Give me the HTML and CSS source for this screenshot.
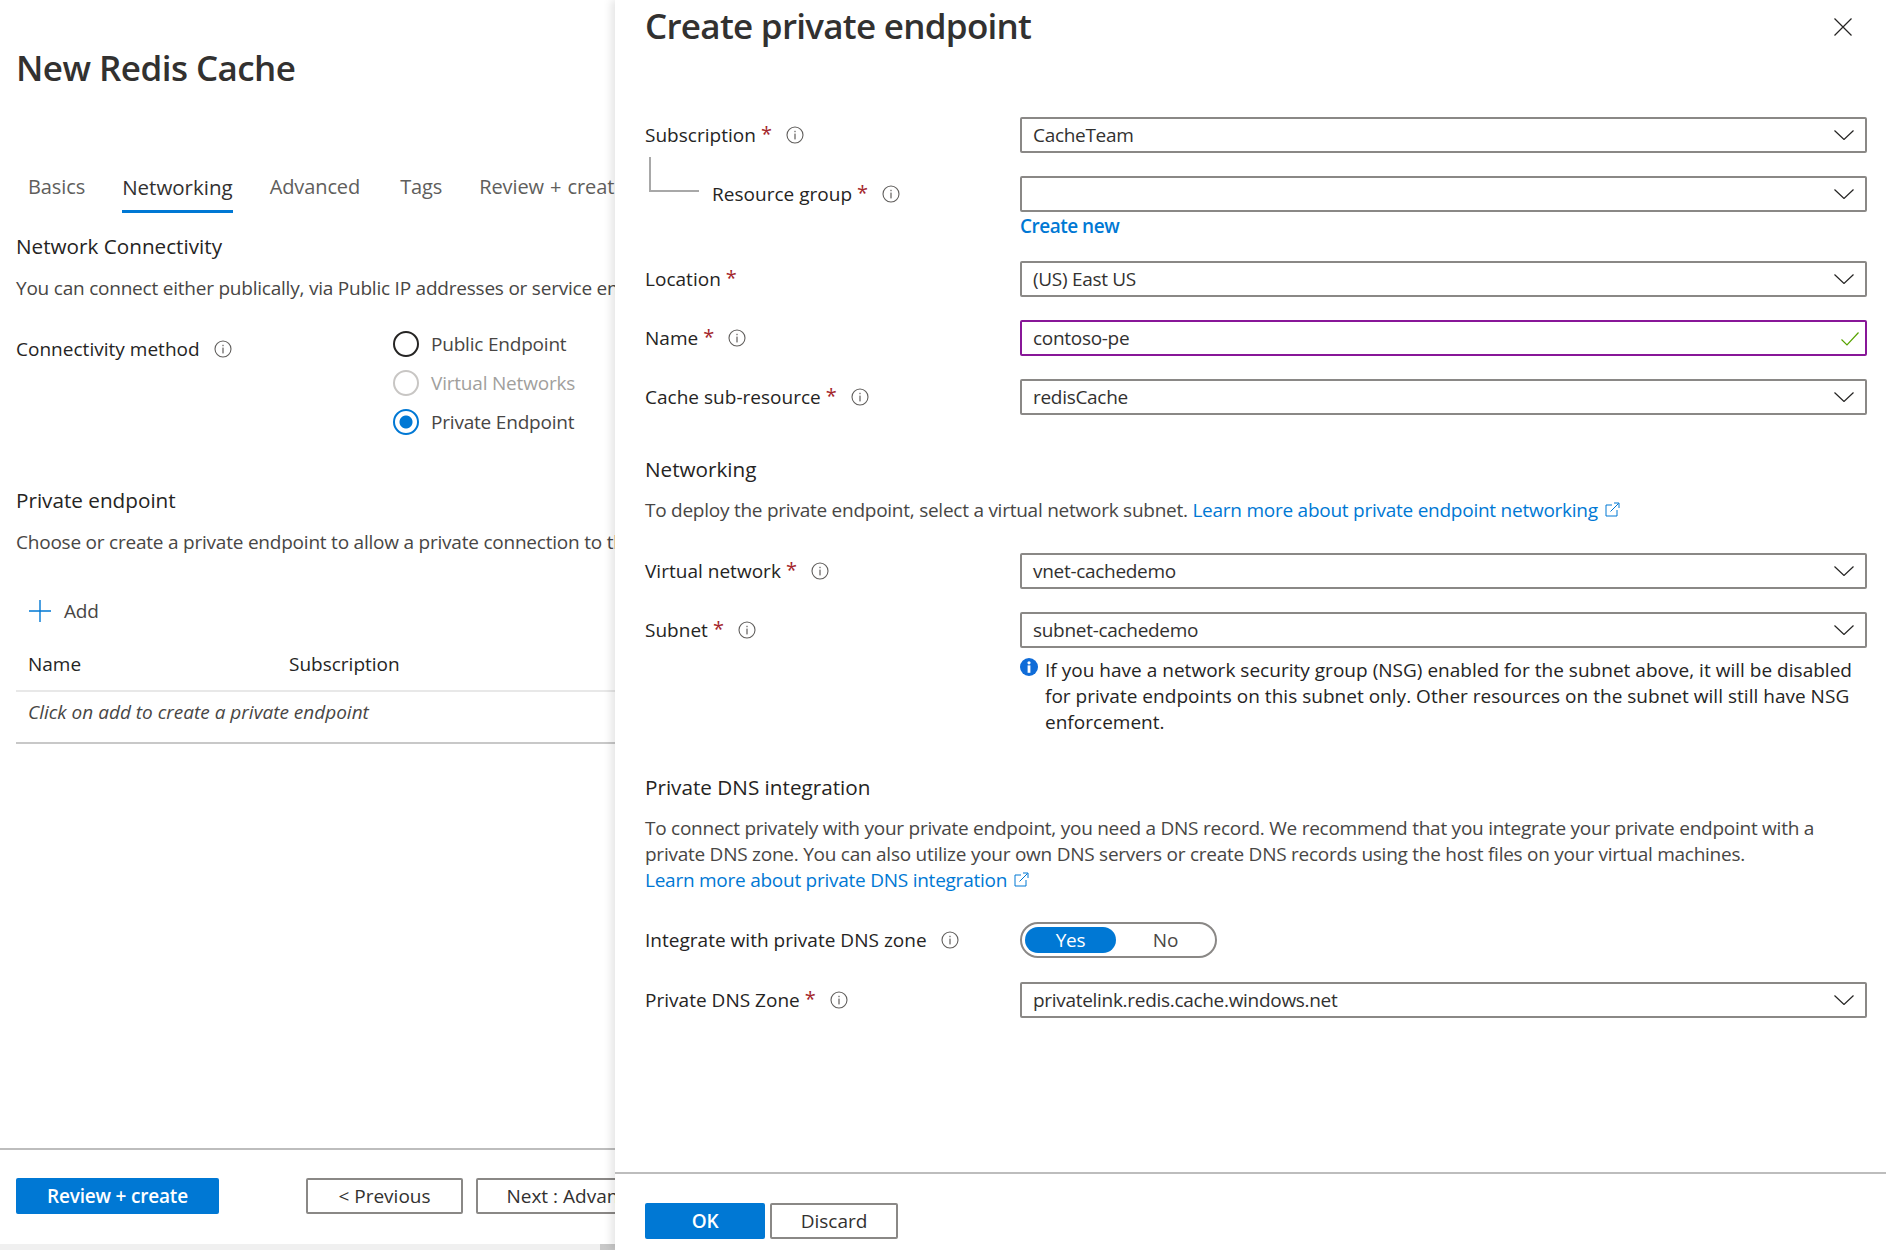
FILE: index.html
```html
<!DOCTYPE html>
<html lang="en">

<head>
    <meta charset="utf-8">
    <meta name="viewport" content="width=device-width, initial-scale=1.0">
    <title>New Redis Cache</title>
    <link rel="stylesheet" href="styles.css">
</head>

<body>
    <svg class="defs" width="0" height="0" aria-hidden="true">
        <symbol id="info" viewBox="0 0 18 18">
            <circle cx="9" cy="9" r="8" fill="none" stroke="#605e5c" stroke-width="1.1" />
            <rect x="8.4" y="7.6" width="1.2" height="5.8" fill="#605e5c" />
            <rect x="8.4" y="4.8" width="1.2" height="1.4" fill="#605e5c" />
        </symbol>
        <symbol id="chevron" viewBox="0 0 20 10">
            <path d="M0.5 0.5 L10 9.5 L19.5 0.5" fill="none" stroke="#252423" stroke-width="1.2" />
        </symbol>
        <symbol id="external" viewBox="0 0 15 15">
            <path d="M7 3 H1 V14 H12 V8" fill="none" stroke="#0078d4" stroke-width="1" />
            <path d="M5.5 9.5 L13.5 1.5 M9 1 H14 V6" fill="none" stroke="#0078d4" stroke-width="1" />
        </symbol>
    </svg>

    <div class="page">
        <main class="blade">
            <h1 class="blade-title">New Redis Cache</h1>

            <nav class="tabs">
                <a class="tab">Basics</a>
                <a class="tab tab-active">Networking</a>
                <a class="tab tab-advanced">Advanced</a>
                <a class="tab">Tags</a>
                <a class="tab tab-review">Review + create</a>
            </nav>

            <section class="group">
                <h2 class="section-title">Network Connectivity</h2>
                <p class="blade-text">You can connect either publically, via Public IP addresses or service endpoints (all networks) or privately, using Private Endpoint.</p>

                <div class="method">
                    <div class="method-label">
                        <span class="strong">Connectivity method</span>
                        <svg class="info"><use href="#info" /></svg>
                    </div>
                    <div class="radios">
                        <label class="radio"><span class="dot"></span>Public Endpoint</label>
                        <label class="radio radio-disabled"><span class="dot"></span>Virtual Networks</label>
                        <label class="radio radio-checked"><span class="dot"></span>Private Endpoint</label>
                    </div>
                </div>
            </section>

            <section class="group group-endpoint">
                <h2 class="section-title">Private endpoint</h2>
                <p class="blade-text">Choose or create a private endpoint to allow a private connection to this resource.</p>

                <div class="add">
                    <svg class="plus" width="22" height="22" viewBox="0 0 22 22">
                        <path d="M11 0 V22 M0 11 H22" stroke="#0078d4" stroke-width="1.4" />
                    </svg>
                    Add
                </div>

                <div class="table-head">
                    <span class="col-name">Name</span>
                    <span>Subscription</span>
                </div>
                <div class="table-row">Click on add to create a private endpoint</div>
            </section>

            <footer class="blade-footer">
                <button class="btn btn-primary btn-review">Review + create</button>
                <button class="btn btn-prev">&lt; Previous</button>
                <button class="btn btn-next">Next : Advanced &gt;</button>
            </footer>
            <div class="scrollbar"><span class="thumb"></span></div>
        </main>

        <aside class="panel">
            <header class="panel-head">
                <h1 class="panel-title">Create private endpoint</h1>
                <svg class="close" width="18" height="18" viewBox="0 0 18 18">
                    <path d="M0.5 0.5 L17.5 17.5 M17.5 0.5 L0.5 17.5" stroke="#252423" stroke-width="1.2" />
                </svg>
            </header>

            <form class="panel-form">
                <div class="row">
                    <div class="label"><span class="strong">Subscription</span><span class="req">*</span><svg class="info"><use href="#info" /></svg></div>
                    <div class="select">CacheTeam<svg class="chevron"><use href="#chevron" /></svg></div>
                </div>
                <div class="row row-child">
                    <span class="tree"></span>
                    <div class="label label-child"><span class="strong">Resource group</span><span class="req">*</span><svg class="info"><use href="#info" /></svg></div>
                    <div class="select"><svg class="chevron"><use href="#chevron" /></svg></div>
                </div>
                <a class="create-new">Create new</a>
                <div class="row">
                    <div class="label"><span class="strong">Location</span><span class="req">*</span></div>
                    <div class="select">(US) East US<svg class="chevron"><use href="#chevron" /></svg></div>
                </div>
                <div class="row">
                    <div class="label"><span class="strong">Name</span><span class="req">*</span><svg class="info"><use href="#info" /></svg></div>
                    <div class="select select-valid">contoso-pe
                        <svg class="check" width="18" height="14" viewBox="0 0 18 14">
                            <path d="M0.5 7.5 L6 13 L17.5 0.5" fill="none" stroke="#57a300" stroke-width="1.2" />
                        </svg>
                    </div>
                </div>
                <div class="row">
                    <div class="label"><span class="strong">Cache sub-resource</span><span class="req">*</span><svg class="info"><use href="#info" /></svg></div>
                    <div class="select">redisCache<svg class="chevron"><use href="#chevron" /></svg></div>
                </div>

                <h2 class="section-title panel-section">Networking</h2>
                <p class="panel-text">To deploy the private endpoint, select a virtual network subnet. <a class="link">Learn more about private endpoint networking<svg class="external"><use href="#external" /></svg></a></p>

                <div class="row row-network">
                    <div class="label"><span class="strong">Virtual network</span><span class="req">*</span><svg class="info"><use href="#info" /></svg></div>
                    <div class="select">vnet-cachedemo<svg class="chevron"><use href="#chevron" /></svg></div>
                </div>
                <div class="row row-subnet">
                    <div class="label"><span class="strong">Subnet</span><span class="req">*</span><svg class="info"><use href="#info" /></svg></div>
                    <div class="select">subnet-cachedemo<svg class="chevron"><use href="#chevron" /></svg></div>
                </div>
                <div class="notice">
                    <svg class="notice-icon" width="18" height="18" viewBox="0 0 18 18">
                        <circle cx="9" cy="9" r="9" fill="#0f6cd8" />
                        <rect x="7.6" y="7.4" width="2.8" height="7.4" fill="#fff" />
                        <circle cx="9" cy="4.8" r="1.6" fill="#fff" />
                    </svg>
                    <p>If you have a network security group (NSG) enabled for the subnet above, it will be disabled for private endpoints on this subnet only. Other resources on the subnet will still have NSG enforcement.</p>
                </div>

                <h2 class="section-title panel-section section-dns">Private DNS integration</h2>
                <p class="panel-text">To connect privately with your private endpoint, you need a DNS record. We recommend that you integrate your private endpoint with a private DNS zone. You can also utilize your own DNS servers or create DNS records using the host files on your virtual machines.<br /><a class="link">Learn more about private DNS integration<svg class="external"><use href="#external" /></svg></a></p>

                <div class="row row-toggle">
                    <div class="label"><span class="strong">Integrate with private DNS zone</span><svg class="info"><use href="#info" /></svg></div>
                    <div class="toggle"><span class="toggle-on">Yes</span><span class="toggle-off">No</span></div>
                </div>
                <div class="row">
                    <div class="label"><span class="strong">Private DNS Zone</span><span class="req">*</span><svg class="info"><use href="#info" /></svg></div>
                    <div class="select">privatelink.redis.cache.windows.net<svg class="chevron"><use href="#chevron" /></svg></div>
                </div>
            </form>

            <footer class="panel-footer">
                <button class="btn btn-primary btn-ok">OK</button>
                <button class="btn btn-discard">Discard</button>
            </footer>
        </aside>
    </div>
</body>

</html>
```

FILE: styles.css
```css
html,
body {
    margin: 0;
    padding: 0;
    height: 100%;
    overflow: hidden;
    background-color: #fff;
}

body {
    font-family: "Open Sans", "Noto Sans", sans-serif;
    font-size: 19px;
    letter-spacing: -0.2px;
    color: #252423;
}

h1,
h2,
p {
    margin: 0;
    font-weight: normal;
}

.defs {
    position: absolute;
}

.page {
    display: flex;
    height: 1250px;
}

/* left blade */
.blade {
    position: relative;
    display: flex;
    flex-direction: column;
    flex: none;
    width: 615px;
    height: 100%;
    overflow: hidden;
    white-space: nowrap;
}

.blade-title {
    margin: 44px 0 0 16px;
    height: 48px;
    font-size: 35px;
    line-height: 48px;
    font-weight: 600;
    letter-spacing: -0.55px;
    color: #323130;
}

.tabs {
    display: flex;
    height: 41px;
    margin-top: 80px;
    padding-left: 28px;
    font-size: 20px;
    line-height: 30px;
    letter-spacing: -0.1px;
    color: #605e5c;
}

.tab {
    display: block;
    height: 38px;
    margin-right: 37px;
}

.tab-active {
    box-sizing: border-box;
    width: 114px;
    height: 41px;
    margin-right: 37px;
    font-size: 20.5px;
    font-weight: 500;
    letter-spacing: 0;
    text-align: center;
    color: #323130;
    border-bottom: 3px solid #0078d4;
}

.tab-advanced {
    margin-right: 40px;
}

.tab-review {
    word-spacing: 1px;
}

.group {
    padding-left: 16px;
}

.section-title {
    font-size: 20.7px;
    line-height: 28px;
    font-weight: 500;
    letter-spacing: 0;
}

.group > .section-title {
    margin-top: 19px;
}

.blade-text {
    margin-top: 14px;
    line-height: 28px;
    letter-spacing: -0.22px;
    color: #484644;
}

.strong {
    font-weight: 500;
    letter-spacing: 0.02px;
}

.method {
    display: flex;
    margin-top: 21px;
}

.method-label {
    display: flex;
    align-items: center;
    gap: 14px;
    width: 377px;
    height: 28px;
    margin-top: 12px;
    flex: none;
}

.info {
    width: 18px;
    height: 18px;
    flex: none;
}

.radios {
    display: flex;
    flex-direction: column;
    gap: 13px;
    margin-top: 8px;
}

.radio {
    display: flex;
    align-items: center;
    gap: 12px;
    height: 26px;
    color: #484644;
}

.dot {
    box-sizing: border-box;
    width: 26px;
    height: 26px;
    border: 2px solid #252423;
    border-radius: 50%;
    flex: none;
}

.radio-disabled {
    color: #a19f9d;
}

.radio-disabled .dot {
    border-color: #c8c6c4;
}

.radio-checked .dot {
    border-color: #0078d4;
    background: radial-gradient(circle, #0078d4 0 6px, #fff 7px);
}

.group-endpoint > .section-title {
    margin-top: 51px;
}

.add {
    display: flex;
    align-items: center;
    gap: 13px;
    margin: 40px 0 0 13px;
    height: 30px;
    color: #484644;
}

.table-head {
    display: flex;
    height: 47px;
    margin-top: 17px;
    padding-left: 12px;
    line-height: 42px;
    font-weight: 500;
    letter-spacing: 0;
    border-bottom: 2px solid #e8e8e8;
}

.col-name {
    width: 261px;
}

.table-row {
    height: 50px;
    padding-left: 12px;
    line-height: 40px;
    font-style: italic;
    letter-spacing: 0;
    color: #484644;
    border-bottom: 2px solid #c8c8c8;
}

.blade-footer {
    display: flex;
    margin-top: auto;
    height: 102px;
    padding: 28px 0 0 16px;
    border-top: 2px solid #bdbdbd;
    box-sizing: border-box;
}

.btn {
    box-sizing: border-box;
    height: 36px;
    padding: 0;
    font-family: inherit;
    font-size: 19px;
    letter-spacing: 0;
    color: #323130;
    background-color: #fff;
    border: 2px solid #8a8886;
    border-radius: 2px;
    flex: none;
}

.btn-primary {
    color: #fff;
    font-weight: 600;
    letter-spacing: -0.2px;
    background-color: #0078d4;
    border-color: #0078d4;
}

.btn-review {
    width: 203px;
}

.btn-prev {
    width: 157px;
    margin-left: 87px;
}

.btn-next {
    width: 220px;
    margin-left: 13px;
}

.scrollbar {
    position: absolute;
    left: 0;
    right: 0;
    bottom: 0;
    height: 6px;
    background-color: #f0f0f0;
}

.thumb {
    position: absolute;
    right: 0;
    width: 15px;
    height: 6px;
    background-color: #c8c8c8;
}

/* right panel */
.panel {
    position: relative;
    display: flex;
    flex-direction: column;
    flex: 1;
    box-sizing: border-box;
    height: 100%;
    box-shadow: -4px 0 8px rgba(0, 0, 0, 0.1);
    background-color: #fff;
}

.panel-head {
    display: flex;
    justify-content: space-between;
    align-items: flex-start;
    height: 54px;
    padding: 0 34px 0 30px;
}

.panel-title {
    font-size: 35px;
    line-height: 52px;
    font-weight: 600;
    letter-spacing: -0.72px;
    color: #323130;
}

.close {
    margin-top: 18px;
}

.panel-form {
    flex: 1;
    padding: 63px 19px 0 30px;
}

.row {
    display: flex;
    position: relative;
    margin-bottom: 23px;
}

.label {
    display: flex;
    align-items: center;
    width: 375px;
    height: 36px;
    flex: none;
}

.label .info {
    margin-left: 14px;
}

.label-child {
    padding-left: 67px;
    box-sizing: border-box;
}

.req {
    margin-left: 5px;
    align-self: flex-start;
    font-size: 20px;
    color: #a4262c;
    line-height: 33px;
}

.tree {
    position: absolute;
    left: 4px;
    top: -19px;
    width: 48px;
    height: 33px;
    border-left: 2px solid #a8a8a8;
    border-bottom: 2px solid #a8a8a8;
}

.select {
    position: relative;
    display: flex;
    align-items: center;
    flex: 1;
    box-sizing: border-box;
    height: 36px;
    padding-left: 11px;
    letter-spacing: -0.3px;
    color: #323130;
    border: 2px solid #8a8886;
    border-radius: 2px;
}

.chevron {
    position: absolute;
    right: 11px;
    top: 11px;
    width: 20px;
    height: 10px;
}

.select-valid {
    border-color: #881798;
}

.check {
    position: absolute;
    right: 6px;
    top: 10px;
}

.row-child {
    margin-bottom: 0;
}

.create-new {
    display: block;
    height: 49px;
    margin-left: 375px;
    line-height: 28px;
    font-weight: 600;
    letter-spacing: -0.5px;
    color: #0078d4;
}

.panel-section {
    margin-top: 40px;
}

.panel-text {
    margin-top: 14px;
    line-height: 26px;
    letter-spacing: -0.25px;
    color: #484644;
}

.link {
    color: #0078d4;
}

.external {
    width: 15px;
    height: 15px;
    margin-left: 7px;
}

.row-network {
    margin-top: 30px;
}

.row-subnet {
    margin-bottom: 9px;
}

.notice {
    display: flex;
    gap: 7px;
    margin-left: 375px;
    line-height: 26px;
    font-weight: 500;
    letter-spacing: 0.02px;
}

.notice-icon {
    flex: none;
    margin-top: 1px;
}

.section-dns {
    margin-top: 38px;
}

.row-toggle {
    margin-top: 29px;
    margin-bottom: 24px;
}

.toggle {
    display: flex;
    align-items: center;
    box-sizing: border-box;
    width: 197px;
    height: 36px;
    padding-left: 3px;
    border: 2px solid #8a8886;
    border-radius: 18px;
}

.toggle-on {
    width: 91px;
    height: 26px;
    line-height: 26px;
    text-align: center;
    color: #fff;
    background-color: #0078d4;
    border-radius: 13px;
}

.toggle-off {
    flex: 1;
    text-align: center;
    color: #484644;
}

.panel-footer {
    display: flex;
    gap: 5px;
    box-sizing: border-box;
    height: 78px;
    padding: 29px 0 0 30px;
    border-top: 2px solid #bdbdbd;
}

.btn-ok {
    width: 120px;
}

.btn-discard {
    width: 128px;
}
```
